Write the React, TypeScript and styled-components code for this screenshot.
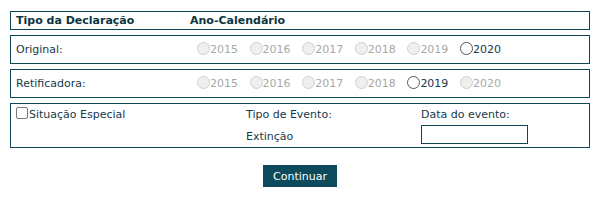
import React from "react";
import styled, { createGlobalStyle } from "styled-components";

const Global = createGlobalStyle`
  body {
    margin: 0;
    background: #ffffff;
    font-family: "DejaVu Sans", Verdana, sans-serif;
    font-size: 11px;
    color: #17394a;
  }
`;

const Page = styled.div`
  width: 580px;
  padding: 11px 0 0 10px;
  display: flex;
  flex-direction: column;
  gap: 5px;
`;

const Box = styled.div<{ $h: number }>`
  box-sizing: border-box;
  height: ${(p) => p.$h}px;
  border: 1px solid #0f4656;
  display: flex;
  align-items: center;
  padding-left: 5px;
`;

const HeaderCell = styled.div<{ $w?: number }>`
  font-weight: bold;
  color: #0c3441;
  width: ${(p) => (p.$w ? `${p.$w}px` : "auto")};
`;

const RowLabel = styled.div`
  width: 181px;
`;

const Years = styled.div`
  display: flex;
  gap: 11.6px;
`;

const YearItem = styled.label<{ $disabled: boolean }>`
  display: flex;
  align-items: center;
  color: ${(p) => (p.$disabled ? "#a8a8a8" : "#17394a")};
  line-height: 13px;
`;

const Radio = styled.span<{ $disabled: boolean }>`
  box-sizing: border-box;
  width: 13px;
  height: 13px;
  border-radius: 50%;
  border: 1px solid ${(p) => (p.$disabled ? "#cfcfcf" : "#555555")};
  background: ${(p) => (p.$disabled ? "#efefef" : "#ffffff")};
  margin-top: -3px;
`;

const SpecialBox = styled.div`
  box-sizing: border-box;
  height: 45px;
  border: 1px solid #0f4656;
  display: grid;
  grid-template-columns: 230px 175px 1fr;
  grid-template-rows: 20px 22px;
  padding-left: 5px;
`;

const CheckLabel = styled.label`
  display: flex;
  align-items: center;
  gap: 1px;
  padding-top: 1px;
`;

const CheckBox = styled.span`
  box-sizing: border-box;
  width: 12px;
  height: 12px;
  border: 1px solid #7a7a7a;
  border-radius: 2px;
  background: #fff;
  margin-top: -3px;
`;

const CellText = styled.div<{ $shift?: number }>`
  display: flex;
  align-items: center;
  padding-top: ${(p) => p.$shift ?? 0}px;
`;

const DateInput = styled.input`
  box-sizing: border-box;
  width: 107px;
  height: 19px;
  border: 1px solid #0f4656;
  margin: 1px 0 0 0;
  padding: 0 2px;
  font: inherit;
  outline: none;
`;

const ButtonRow = styled.div`
  display: flex;
  justify-content: center;
  margin-top: 12px;
`;

const Button = styled.button`
  height: 22px;
  padding: 0 10px;
  background: #0c4a5c;
  color: #ffffff;
  border: none;
  font-family: "DejaVu Sans", Verdana, sans-serif;
  font-size: 11px;
  cursor: pointer;
`;

const allYears = [2015, 2016, 2017, 2018, 2019, 2020];

function YearRow({ label, enabled }: { label: string; enabled: number }) {
  return (
    <Box $h={29}>
      <RowLabel>{label}</RowLabel>
      <Years>
        {allYears.map((y) => {
          const dis = y !== enabled;
          return (
            <YearItem key={y} $disabled={dis}>
              <Radio $disabled={dis} />
              {y}
            </YearItem>
          );
        })}
      </Years>
    </Box>
  );
}

export default function App() {
  return (
    <>
      <Global />
      <Page>
        <Box $h={19}>
          <HeaderCell $w={174}>Tipo da Declaração</HeaderCell>
          <HeaderCell>Ano-Calendário</HeaderCell>
        </Box>
        <YearRow label="Original:" enabled={2020} />
        <YearRow label="Retificadora:" enabled={2019} />
        <SpecialBox>
          <CheckLabel>
            <CheckBox />
            Situação Especial
          </CheckLabel>
          <CellText>Tipo de Evento:</CellText>
          <CellText>Data do evento:</CellText>
          <div />
          <CellText $shift={2}>Extinção</CellText>
          <div>
            <DateInput type="text" />
          </div>
        </SpecialBox>
        <ButtonRow>
          <Button>Continuar</Button>
        </ButtonRow>
      </Page>
    </>
  );
}
